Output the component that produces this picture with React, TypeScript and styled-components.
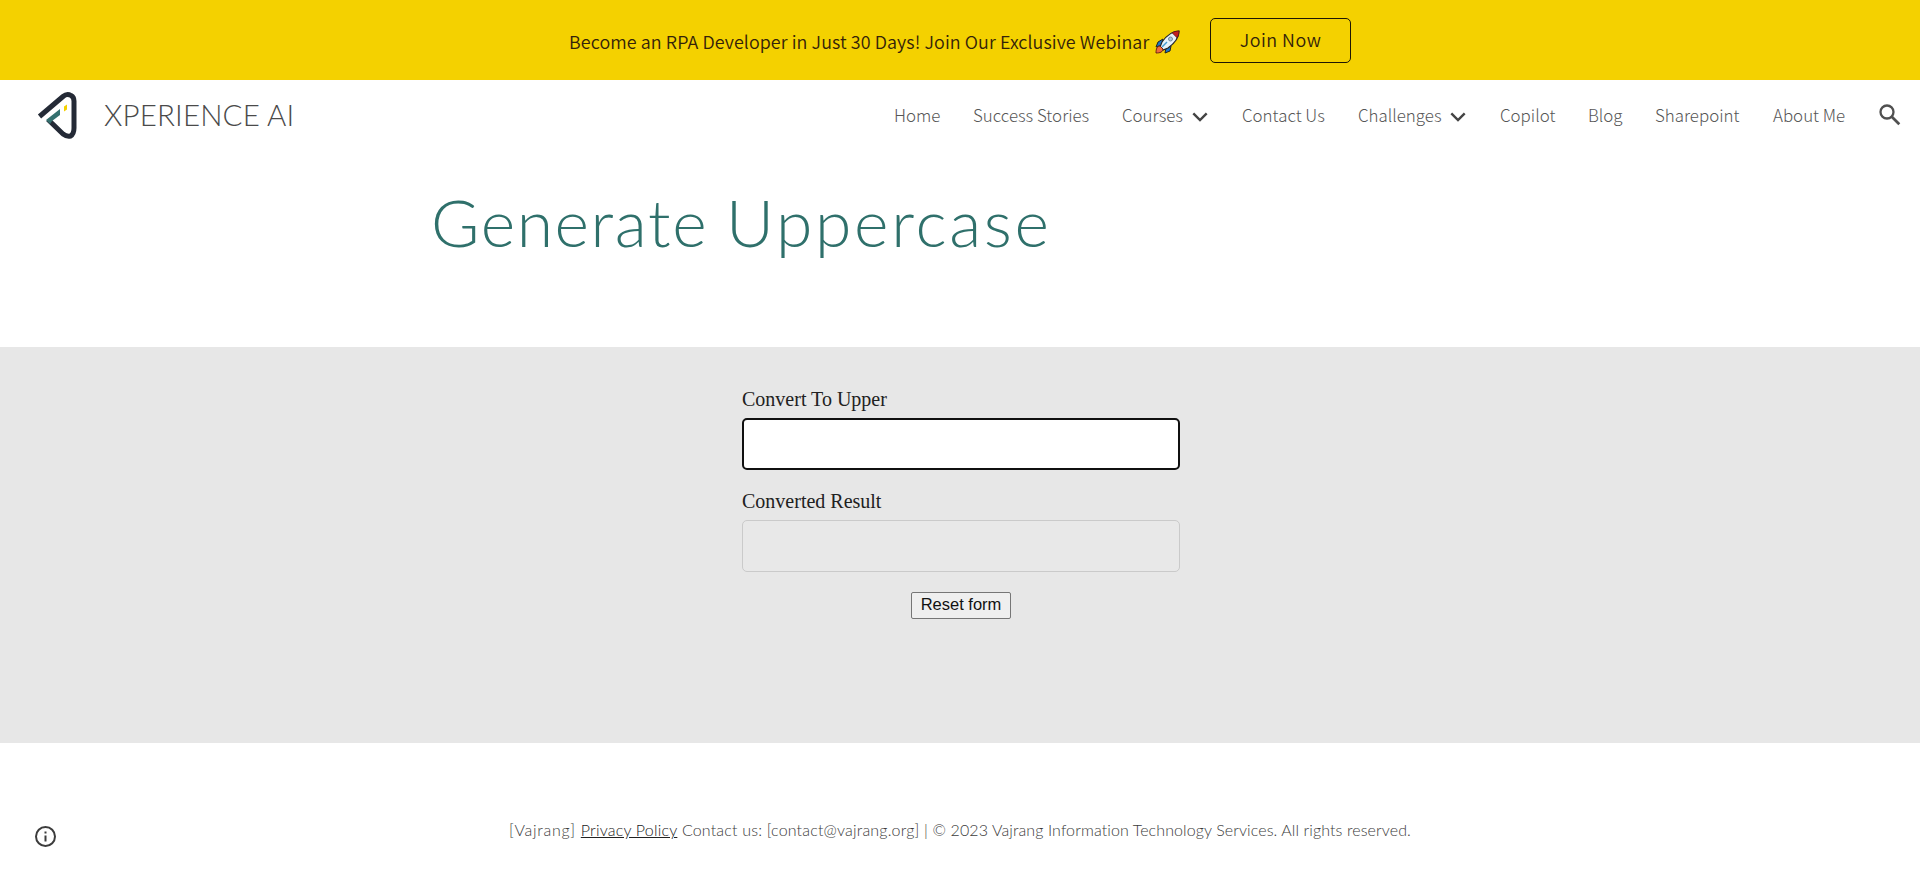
import React from "react";
import styled, { createGlobalStyle } from "styled-components";

const Global = createGlobalStyle`
  * { box-sizing: border-box; }
  html, body { margin: 0; background: #fff; }
  body { color: #212121; overflow: hidden; }
`;

const sans = `"Noto Sans CJK JP", "Noto Sans", sans-serif`;
const display = `Lato, "Open Sans", sans-serif`;

const Page = styled.div`
  height: 879px;
  display: flex;
  flex-direction: column;
`;

const Banner = styled.aside`
  height: 80px;
  flex: none;
  display: flex;
  align-items: flex-start;
  padding-left: 569px;
  background: #f4d100;
  color: #33220a;
  font-family: ${sans};
`;

const BannerText = styled.span`
  width: 580px;
  margin-top: 27px;
  font-size: 17.9px;
  font-weight: 350;
  letter-spacing: 0.09px;
  line-height: 28px;
  white-space: nowrap;
`;

const Rocket = styled.svg`
  width: 25px;
  height: 24px;
  margin: 30px 30px 0 6px;
`;

const JoinButton = styled.button`
  width: 141px;
  height: 45px;
  margin-top: 18px;
  padding: 0 0 3px;
  border: 1px solid #1d1604;
  border-radius: 5px;
  background: transparent;
  color: #33220a;
  font: 350 17.9px ${sans};
  letter-spacing: 0.5px;
`;

const Header = styled.header`
  height: 71px;
  flex: none;
  display: flex;
  align-items: center;
  padding: 0 19px 2px 35px;
`;

const Logo = styled.svg`
  width: 44px;
  height: 50px;
  flex: none;
`;

const SiteName = styled.span`
  margin-left: 25px;
  width: 200px;
  color: #4a4a4a;
  font: 300 29.5px/40px ${display};
  letter-spacing: 0.15px;
  white-space: nowrap;
`;

const Nav = styled.nav`
  margin-left: auto;
  display: flex;
  align-items: center;
  font: 300 16.9px/28px ${sans};
  color: #565656;
`;

const NavItem = styled.a<{ $width: number; $gap?: number }>`
  display: flex;
  align-items: center;
  justify-content: space-between;
  width: ${(p) => p.$width}px;
  margin-right: ${(p) => p.$gap ?? 33}px;
  white-space: nowrap;
`;

const Chevron = styled.svg`
  width: 16px;
  height: 10px;
  margin-top: 5px;
`;

const SearchIcon = styled.svg`
  width: 22px;
  height: 22px;
`;

const Hero = styled.section`
  height: 196px;
  flex: none;
  padding: 31px 0 0 431px;
`;

const Title = styled.h1`
  margin: 0;
  color: #2f706b;
  font: 300 66px/80px ${display};
  white-space: nowrap;
`;

const Word = styled.span<{ $tracking: number }>`
  letter-spacing: ${(p) => p.$tracking}px;
`;

const Tool = styled.main`
  height: 396px;
  flex: none;
  display: flex;
  flex-direction: column;
  align-items: center;
  padding-top: 37px;
  background: #e7e7e7;
`;

const Form = styled.form`
  width: 438px;
  margin-left: 2px;
  display: flex;
  flex-direction: column;
`;

const Label = styled.label`
  height: 30px;
  margin-bottom: 4px;
  color: #212121;
  font: 20px/30px "Liberation Serif", serif;
`;

const Field = styled.input`
  height: 52px;
  margin-bottom: 16px;
  border: 2px solid #101010;
  border-radius: 5px;
  background: #fff;
  outline: none;
  &:disabled {
    border: 1px solid #cacaca;
    background: #e8e8e8;
    margin-bottom: 20px;
  }
`;

const ResetButton = styled.button`
  align-self: center;
  width: 100px;
  height: 27px;
  padding: 0 0 2px;
  border: 1px solid #767676;
  border-radius: 2px;
  background: #efefef;
  color: #111;
  font: 16.5px "Liberation Sans", sans-serif;
  white-space: nowrap;
`;

const Footer = styled.footer`
  flex: 1;
  display: flex;
  padding-left: 35px;
`;

const InfoIcon = styled.svg`
  width: 21px;
  height: 21px;
  margin-top: 83px;
`;

const Legal = styled.p`
  margin: 75px 0 0 453px;
  color: #3c3c3c;
  font: 300 16px/24px ${display};
  letter-spacing: 0.1px;
  font-variant-ligatures: none;
  white-space: nowrap;
`;

const PolicyLink = styled.a`
  text-decoration: underline;
  color: #212121;
  letter-spacing: 0.2px;
`;

const Arrow = () => (
  <Chevron viewBox="0 0 16 10" fill="none" stroke="#444" strokeWidth="2.4">
    <path d="M1.3 1.3 8 8l6.7-6.7" />
  </Chevron>
);

export default function App() {
  return (
    <Page>
      <Global />
      <Banner>
        <BannerText>Become an RPA Developer in Just 30 Days! Join Our Exclusive Webinar</BannerText>
        <Rocket viewBox="0 0 25 24">
          <path d="M8 9 3 12 1 17l6-2zM16 16l-1 5-5 2 1-5z" fill="#1976c9" stroke="#222" />
          <path d="M24 1c-7 0-12 4-17 11l-2 5 3 3 5-2c7-5 11-10 11-17z" fill="#e6f1f8" stroke="#222" strokeWidth="1.2" />
          <path d="M24 1c-3 0-5 .7-7 1.700l5 5C23.500 5.500 24 4 24 1z" fill="#c51f1f" stroke="#4c1414" strokeWidth=".7" />
          <path d="M5 16c-3 0-4 3-4 7 4 0 7-1 7-4z" fill="#ef6c3b" stroke="#6a2415" />
          <circle cx="15.500" cy="9" r="2" fill="#a9c3d5" stroke="#718a9b" />
          <path d="m7 17 5-5" stroke="#459bd0" strokeWidth="1.500" />
        </Rocket>
        <JoinButton>Join Now</JoinButton>
      </Banner>
      <Header>
        <Logo viewBox="0 0 44 50" fill="none">
          <path d="M4.500 26.500 28 6.500Q32 3 36 5.500 39 7 39 11V38Q39 44 35.500 46 32 47 28 44L13 29.500" stroke="#242a36" strokeWidth="5" strokeLinejoin="round" />
          <path d="M11 30 25 19v6l-8 6-2 3z" fill="#34706f" />
          <path d="m29 16.500 3-2v5l-3 2z" fill="#f4d100" />
        </Logo>
        <SiteName>XPERIENCE AI</SiteName>
        <Nav>
          <NavItem $width={46}>Home</NavItem>
          <NavItem $width={116}>Success Stories</NavItem>
          <NavItem $width={86} $gap={34}>Courses<Arrow /></NavItem>
          <NavItem $width={83}>Contact Us</NavItem>
          <NavItem $width={108} $gap={34}>Challenges<Arrow /></NavItem>
          <NavItem $width={56} $gap={32}>Copilot</NavItem>
          <NavItem $width={35} $gap={32}>Blog</NavItem>
          <NavItem $width={85}>Sharepoint</NavItem>
          <NavItem $width={73}>About Me</NavItem>
          <SearchIcon viewBox="0 0 22 22" fill="none" stroke="#505050" strokeWidth="2.3">
            <circle cx="8" cy="8" r="6.500" />
            <path d="m12.800 12.800 7.500 7.500" strokeWidth="2.700" />
          </SearchIcon>
        </Nav>
      </Header>
      <Hero>
        <Title>
          <Word $tracking={1.6}>Generate</Word> <Word $tracking={2.7}>Uppercase</Word>
        </Title>
      </Hero>
      <Tool>
        <Form>
          <Label>Convert To Upper</Label>
          <Field />
          <Label>Converted Result</Label>
          <Field disabled />
          <ResetButton type="button">Reset form</ResetButton>
        </Form>
      </Tool>
      <Footer>
        <InfoIcon viewBox="0 0 21 21" fill="none" stroke="#3c3c3c" strokeWidth="2">
          <circle cx="10.500" cy="10.500" r="9.500" />
          <path d="M10.500 9.500v6M10.500 5.500v2" />
        </InfoIcon>
        <Legal>
          <Word $tracking={0.7}>[Vajrang] </Word><PolicyLink>Privacy Policy</PolicyLink><Word $tracking={0.18}> Contact us: [contact@vajrang.org] | </Word>© 2023 Vajrang Information Technology Services. All rights reserved.
        </Legal>
      </Footer>
    </Page>
  );
}
